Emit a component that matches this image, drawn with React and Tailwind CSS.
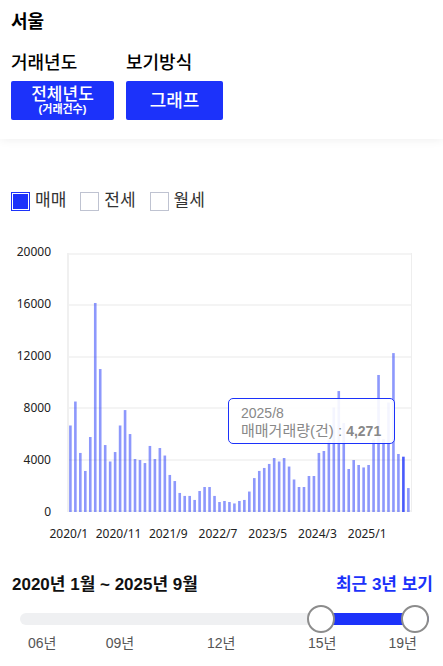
import React, { useState } from "react";

// monthly deals, 2020/1 ~ 2025/9
const counts = [
    6680, 8530, 4560, 3170, 5790, 16140, 11040, 5170, 3900, 4630, 6680, 7870, 6020, 4090, 4010,
    3780, 5100, 4090, 4940, 4360, 2860, 2390, 1470, 1240, 1240, 930, 1620, 1930, 1930, 1240, 770,
    850, 770, 660, 850, 930, 1580, 2620, 3170, 3400, 3710, 4170, 3900, 4170, 3510, 2510, 1930,
    1930, 2780, 2780, 4560, 4710, 5600, 8070, 9340, 6870, 3320, 4010, 3630, 3440, 3630, 5600,
    10580, 5640, 8450, 12270, 4480, 4271, 1850,
]
const yTicks = [20000, 16000, 12000, 8000, 4000, 0]
const xTicks = ["2020/1", "2020/11", "2021/9", "2022/7", "2023/5", "2024/3", "2025/1"]
const MAX = 20000
const MONTHS = counts.length
const ACTIVE = 67

const App = () => {
    const [types, setTypes] = useState(["매매"])

    const toggleType = (name) => {
        setTypes(types.includes(name) ? types.filter((t) => t !== name) : [...types, name])
    }

    return (
        <div className="bg-white text-black font-['Liberation_Sans','Noto_Sans_CJK_KR',sans-serif]">
            <header className="px-[11px] pt-2 pb-[19px] shadow-[0_0_10px_rgba(0,0,0,0.08)]">
                <h1 className="text-lg leading-7 font-bold">서울</h1>
                <div className="flex gap-3 pt-[13px]">
                    <FilterButton title="거래년도" width="w-[103px]">
                        <span className="block text-[17px] leading-[17px]">전체년도</span>
                        <span className="block text-[11px] leading-[13px] font-bold">(거래건수)</span>
                    </FilterButton>
                    <FilterButton title="보기방식" width="w-[97px]">
                        <span className="text-lg">그래프</span>
                    </FilterButton>
                </div>
            </header>
            <main className="pt-[50px]">
                <div className="flex gap-[14px] px-[11px]">
                    {["매매", "전세", "월세"].map((name) => (
                        <TypeCheckbox
                            key={name}
                            label={name}
                            isChecked={types.includes(name)}
                            checkHandler={() => toggleType(name)}
                        />
                    ))}
                </div>
                <Chart />
                <Period />
            </main>
        </div>
    )
}

export default App;

const FilterButton = (props) => {
    return (
        <div>
            <h2 className="text-lg leading-7 font-medium pb-1">{props.title}</h2>
            <button type="button" className={`${props.width} block h-[39px] rounded-xs bg-[#1c32fa] text-center font-medium text-white`}>
                {props.children}
            </button>
        </div>
    )
}

const TypeCheckbox = (props) => {
    return (
        <label className="flex items-center gap-[5px] text-[17px] leading-6 text-[#333]">
            <input
                type="checkbox"
                checked={props.isChecked}
                onChange={props.checkHandler}
                className="size-[19px] appearance-none border border-[#bfc3d1] bg-white bg-clip-content p-px checked:border-[#1c32fa] checked:bg-[#1c32fa]"
            />
            {props.label}
        </label>
    )
}

const Chart = () => {
    return (
        <div className="flex pt-10 pr-[31px] font-['Noto_Sans','Noto_Sans_CJK_KR',sans-serif] text-xs text-[#222]">
            <div className="-mt-[9px] flex h-[276px] w-[51px] flex-col justify-between text-right leading-4">
                {yTicks.map((t) => <span key={t}>{t}</span>)}
            </div>
            <div className="relative ml-4 flex-1">
                <svg className="block h-[259px] w-full" viewBox="0 0 345 259" preserveAspectRatio="none">
                    {yTicks.map((t) => (
                        <rect key={t} x="0" y={Math.round((MAX - t) / MAX * 257)} width="345" height="2" fill="#f4f4f4" />
                    ))}
                    <rect x="0" y="0" width="2" height="259" fill="#f0f0f0" />
                    <rect x="344" y="0" width="1" height="259" fill="#eeeeee" />
                    {counts.map((count, index) => (
                        <rect
                            key={index}
                            x={2.1 + index * 4.97}
                            y={259 - count / MAX * 259}
                            width="2.6"
                            height={count / MAX * 259}
                            fill="#1c32fa"
                            fillOpacity={index === ACTIVE ? 0.8 : 0.5}
                        />
                    ))}
                </svg>
                <div className="absolute top-[145px] right-[17px] w-[167px] rounded-[5px] border border-[#1c32fa] bg-white/90 px-3 pt-[6px] pb-1 font-['Liberation_Sans','Noto_Sans_CJK_KR',sans-serif] text-sm leading-[17px] whitespace-nowrap text-[#888]">
                    <p>2025/8</p>
                    <p className="flex items-baseline gap-1 text-[15px]">매매거래량(건) : <b className="text-sm leading-4">4,271</b></p>
                </div>
                <div className="-ml-[23px] mr-5 flex pt-[14px] text-center leading-4">
                    {xTicks.map((t) => <span key={t} className="flex-1 basis-0">{t}</span>)}
                </div>
            </div>
        </div>
    )
}

const Period = () => {
    const [range, setRange] = useState([52, MONTHS])
    const thumb = "pointer-events-none absolute inset-x-0 top-0 h-7 w-full appearance-none bg-transparent [&::-webkit-slider-thumb]:pointer-events-auto [&::-webkit-slider-thumb]:size-7 [&::-webkit-slider-thumb]:appearance-none [&::-webkit-slider-thumb]:rounded-full [&::-webkit-slider-thumb]:border-2 [&::-webkit-slider-thumb]:border-[#8c8c8c] [&::-webkit-slider-thumb]:bg-white"

    return (
        <section className="pt-[31px] pb-3">
            <div className="flex justify-between pl-3 pr-[10px] text-[17px] leading-6 font-bold">
                <h2 className="text-[#111]">2020년 1월 ~ 2025년 9월</h2>
                <a href="#recent" className="text-[#1c32fa]">최근 3년 보기</a>
            </div>
            <div className="relative mt-2 ml-5 mr-[14px] flex h-7 items-center">
                <div className="h-3 w-full overflow-hidden rounded-full bg-[#eff0f2]">
                    <div className="h-full bg-[#1c32fa]" style={{ marginLeft: range[0] / MONTHS * 100 + "%", width: (range[1] - range[0]) / MONTHS * 100 + "%" }} />
                </div>
                <input type="range" aria-label="시작" max={MONTHS} className={thumb} value={range[0]} onChange={e => setRange([Math.min(+e.target.value, range[1]), range[1]])} />
                <input type="range" aria-label="끝" max={MONTHS} className={thumb} value={range[1]} onChange={e => setRange([range[0], Math.max(+e.target.value, range[0])])} />
            </div>
            <div className="flex pl-7 pr-[26px] text-sm leading-5 text-[#555]">
                <span className="w-1/5">06년</span>
                <span className="w-[26%]">09년</span>
                <span className="w-[26%]">12년</span>
                <span className="flex-1">15년</span>
                <span>19년</span>
            </div>
        </section>
    )
}
